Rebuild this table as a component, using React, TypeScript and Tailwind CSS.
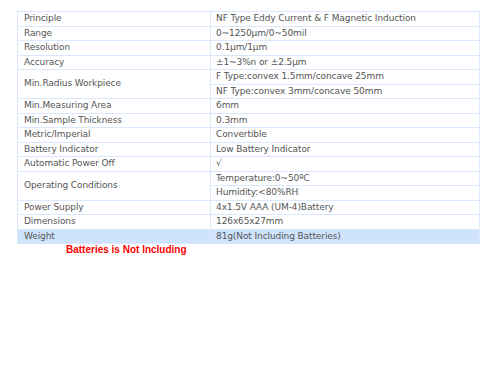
const rows: { label: string; values: string[]; hl?: boolean }[] = [
  { label: "Principle", values: ["NF Type Eddy Current & F Magnetic Induction"] },
  { label: "Range", values: ["0~1250μm/0~50mil"] },
  { label: "Resolution", values: ["0.1μm/1μm"] },
  { label: "Accuracy", values: ["±1~3%n or ±2.5μm"] },
  { label: "Min.Radius Workpiece", values: ["F Type:convex 1.5mm/concave 25mm", "NF Type:convex 3mm/concave 50mm"] },
  { label: "Min.Measuring Area", values: ["6mm"] },
  { label: "Min.Sample Thickness", values: ["0.3mm"] },
  { label: "Metric/Imperial", values: ["Convertible"] },
  { label: "Battery Indicator", values: ["Low Battery Indicator"] },
  { label: "Automatic Power Off", values: ["√"] },
  { label: "Operating Conditions", values: ["Temperature:0~50ºC", "Humidity:<80%RH"] },
  { label: "Power Supply", values: ["4x1.5V AAA (UM-4)Battery"] },
  { label: "Dimensions", values: ["126x65x27mm"] },
  { label: "Weight", values: ["81g(Not Including Batteries)"], hl: true },
];

export default function App() {
  return (
    <div className="h-[378px] w-[500px] bg-white pl-[17px] pt-[11px] font-['DejaVu_Sans',sans-serif] text-[9px] tracking-[-0.1px] text-[#555]">
      <table className="w-[463px] border-collapse">
        <tbody>
          {rows.map((r) =>
            r.values.map((v, i) => (
              <tr key={r.label + i} className={r.hl ? "bg-[#cfe3fc]" : ""}>
                {i === 0 ? (
                  <td
                    rowSpan={r.values.length}
                    className="w-[193px] border border-[#d9e9fb] pl-[6px] align-middle"
                  >
                    {r.label}
                  </td>
                ) : null}
                <td className="h-[14.5px] border border-[#d9e9fb] pl-[5px] leading-[13px]">{v}</td>
              </tr>
            ))
          )}
        </tbody>
      </table>
      <div className="pl-[49px] font-['Liberation_Sans',Arial,sans-serif] text-[10px] leading-[12px] font-bold tracking-normal text-[#f00]">
        Batteries is Not Including
      </div>
    </div>
  );
}
